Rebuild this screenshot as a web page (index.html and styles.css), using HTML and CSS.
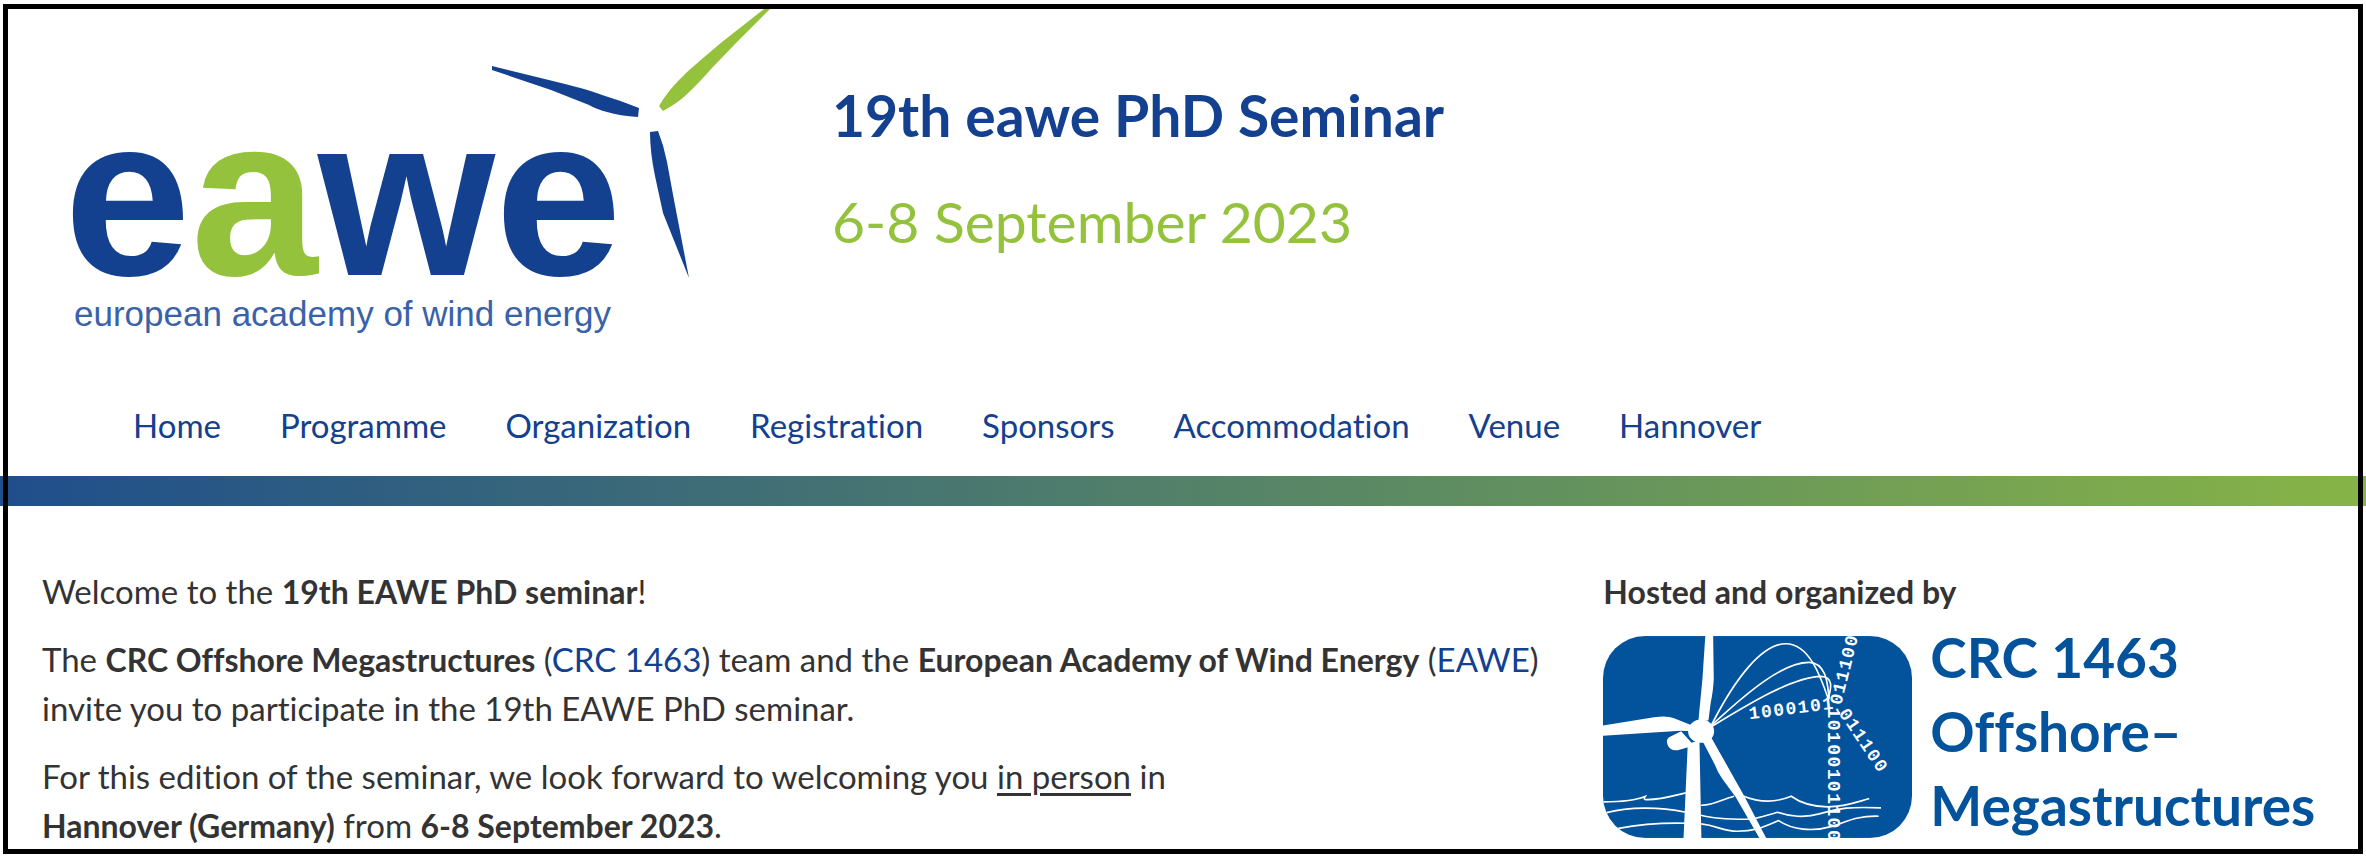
FILE: index.html
```html
<!DOCTYPE html>
<html lang="en">
<head>
<meta charset="utf-8">
<title>19th eawe PhD Seminar</title>
<link rel="stylesheet" href="styles.css">
</head>
<body>
<div class="page">
<header class="header">
  <svg class="logo" viewBox="60 0 712 340" role="img" aria-label="eawe – european academy of wind energy">
    <text class="logo-word" x="64" y="275">e<tspan class="green">a</tspan>we</text>
    <text class="logo-tag" x="74" y="326">european academy of wind energy</text>
    <path class="blue" d="M492 66 L561 83 Q590 90 602 95 Q622 101 639 108 L638 117 Q620 116 607 112 Q596 109 589 105 L551 90 L492 70 Z"/>
    <path class="green" d="M764 9 L722 42 Q697 63 686 73 Q668 90 659 106 L663 111 Q676 104 685 96 Q698 84 712 68 L737 42 L770 9 Z"/>
    <path class="blue" d="M650 132 L658 131 Q664 146 667 162 L674 200 L689 278 L663 213 L655 176 Q650 152 650 132 Z"/>
  </svg>
  <div class="titles">
    <h1>19th eawe PhD Seminar</h1>
    <p class="date">6-8 September 2023</p>
  </div>
</header>
<nav class="nav" aria-label="Main">
  <a href="#home">Home</a>
  <a href="#programme">Programme</a>
  <a href="#organization">Organization</a>
  <a href="#registration">Registration</a>
  <a href="#sponsors">Sponsors</a>
  <a href="#accommodation">Accommodation</a>
  <a href="#venue">Venue</a>
  <a href="#hannover">Hannover</a>
</nav>
<div class="band"></div>
<main class="main">
  <section class="intro">
    <p>Welcome to the <strong>19th EAWE PhD seminar</strong>!</p>
    <p>The <strong>CRC Offshore Megastructures</strong> (<a href="#crc">CRC 1463</a>) team and the <strong>European Academy of Wind Energy</strong> (<a href="#eawe">EAWE</a>)<br>invite you to participate in the 19th EAWE PhD seminar.</p>
    <p>For this edition of the seminar, we look forward to welcoming you <u>in person</u> in<br><strong>Hannover (Germany)</strong> from <strong>6-8 September 2023</strong>.</p>
  </section>
  <aside class="host">
    <h2>Hosted and organized by</h2>
    <div class="host-brand">
      <svg class="host-icon" viewBox="72 227 926 605" aria-hidden="true">
        <defs><clipPath id="tile"><rect x="72" y="227" width="926" height="605" rx="126"/></clipPath></defs>
        <g clip-path="url(#tile)">
          <rect class="tile" x="72" y="227" width="926" height="605"/>
          <g class="line">
            <path d="M398 492 C470 350 550 250 620 250 C690 250 725 350 747 415"/>
            <path d="M398 494 C500 400 610 305 690 306 C745 308 745 380 750 415"/>
            <path d="M398 498 C510 430 640 350 725 348 C765 350 755 385 747 415"/>
            <path d="M72 724 C120 724 165 722 198 708 Q192 717 202 717 C245 718 285 705 320 697"/>
            <path d="M366 734 C405 735 430 715 465 707"/>
            <path d="M492 706 C540 726 590 726 636 707 C665 728 700 738 745 739 C800 738 830 725 870 714"/>
            <path d="M80 757 C150 738 240 738 320 755"/>
            <path d="M366 764 C410 776 460 776 500 776 C540 776 560 764 595 755 C630 768 680 772 720 760 C775 742 820 738 905 742"/>
            <path d="M115 804 C180 792 250 786 320 788"/>
            <path d="M366 790 C415 795 430 812 475 812 C530 812 555 798 598 780 C640 808 700 814 755 798 C800 785 830 765 898 767"/>
          </g>
          <g class="white">
            <path d="M379 220 L402 220 L404 355 Q402 395 395 425 L388 480 L358 480 L370 355 Z"/>
            <path d="M72 495 L225 470 Q265 465 285 473 L345 497 L340 512 L304 511 L72 526 Z"/>
            <path d="M306 512 L270 530 Q260 538 265 551 Q272 572 296 569 L345 555 Z"/>
            <ellipse cx="366" cy="512" rx="39" ry="35"/>
            <path d="M326 550 L361 540 L367 840 L313 840 Z"/>
            <path d="M372 545 L396 530 L496 708 L565 840 L545 840 L470 710 L430 655 Q415 635 408 614 Z"/>
          </g>
          <g class="bits">
            <text transform="translate(511 476) rotate(-7)" x="0 37 74 111 148 185 222">1000101</text>
            <text transform="translate(785 436) rotate(-76)" x="0 36 72 108 144 180">011100</text>
            <text transform="translate(746 441) rotate(90)" x="0 37 73 110 147 184 220 257 294 330 367">10100101100</text>
            <text transform="translate(777 458) rotate(56)" x="0 37 74 111 148 185">011100</text>
          </g>
        </g>
      </svg>
      <p class="host-name">CRC 1463<br>Offshore–<br>Megastructures</p>
    </div>
  </aside>
</main>
</div>
<div class="frame"></div>
</body>
</html>
```
FILE: styles.css
```css
* { box-sizing: border-box; }
body {
  margin: 0;
  background: #fff;
  color: #333;
  font: 33px/49px Lato, "Noto Sans", sans-serif;
  font-variant-ligatures: no-common-ligatures;
}
h1, h2, p { margin: 0; }
a { color: #13408f; text-decoration: none; }
strong { font-size: 32px; font-weight: 700; }
u { text-decoration-thickness: 3px; text-underline-offset: 4px; }

.page { min-height: 100vh; }
.frame {
  position: fixed;
  inset: 4px 3px;
  border: 5px solid #000;
  pointer-events: none;
}

.header { display: flex; gap: 60px; padding-left: 60px; }
.logo { width: 712px; height: 340px; flex: none; }
.logo-word { font: 700 228px "Liberation Sans", sans-serif; }
.logo-word, .blue { fill: #13408f; }
.logo-tag { font: 35px "Liberation Sans", sans-serif; fill: #3a62a8; }
.green { fill: #94c23c; }
.titles { padding-top: 62px; font-size: 57px; line-height: 106px; }
.titles h1 { font-size: 57px; font-weight: 700; color: #13408f; }
.date { color: #94c23c; }

.nav { display: flex; flex-wrap: wrap; gap: 0 59px; padding: 61px 60px 27px 133px; line-height: 48px; }

.band { height: 30px; background: linear-gradient(90deg, #1f4e8c, #87b446); }

.main { display: grid; grid-template-columns: 13fr 6fr; padding: 61px 42px 0; }
.intro { display: grid; gap: 19px; }
.host h2 { font-size: 32px; font-weight: 700; }
.host-brand { display: flex; gap: 18px; padding-top: 4px; }
.host-icon { width: 309px; height: 202px; margin-top: 16px; flex: none; }
.host-name { color: #03529c; font-size: 55px; font-weight: 700; line-height: 74px; }
.tile { fill: #03529c; }
.white, .bits { fill: #fff; }
.line { fill: none; stroke: #fff; stroke-width: 5px; }
.bits { font: 700 54px "Liberation Mono", monospace; }
```
